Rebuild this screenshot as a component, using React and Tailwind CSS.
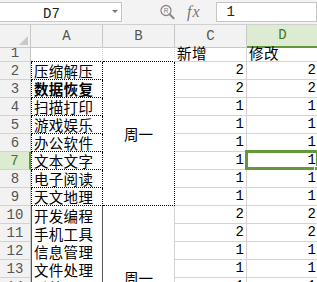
import React from 'react';

const CJK = "font-['Noto_Sans_CJK_SC',sans-serif]";
const MONO = "font-['Liberation_Mono',monospace]";

const rows = [
  { n: 2, a: '压缩解压', c: 2, d: 2 },
  { n: 3, a: '数据恢复', c: 2, d: 2, bold: true },
  { n: 4, a: '扫描打印', c: 1, d: 1 },
  { n: 5, a: '游戏娱乐', c: 1, d: 1 },
  { n: 6, a: '办公软件', c: 1, d: 1 },
  { n: 7, a: '文本文字', c: 1, d: 1 },
  { n: 8, a: '电子阅读', c: 1, d: 1 },
  { n: 9, a: '天文地理', c: 1, d: 1 },
  { n: 10, a: '开发编程', c: 2, d: 2 },
  { n: 11, a: '手机工具', c: 2, d: 2 },
  { n: 12, a: '信息管理', c: 1, d: 1 },
  { n: 13, a: '文件处理', c: 1, d: 1 },
  { n: 14, a: '系统工具', c: 1, d: 1 },
  { n: 15, a: '网络工具', c: 1, d: 1 },
  { n: 16, a: '图形图像', c: 1, d: 1 },
  { n: 17, a: '安全防护', c: 1, d: 1 },
];

function RowHead({ n, active }) {
  return (
    <div
      className={`flex items-center justify-center border-b border-[#d2d2d2] text-[14px] leading-none ${MONO} ${
        active
          ? 'bg-[#dcebd2] text-[#3f7a22] border-r-2 border-r-[#62983a]'
          : 'bg-[#f2f2f2] text-[#555] border-r border-r-[#c8c8c8]'
      }`}
    >
      {n}
    </div>
  );
}

function NumCell({ v, selected }) {
  return (
    <div className={`relative flex items-end justify-end pr-[2px] pb-[2px] border-r border-b border-[#d4d4d4] text-[14px] leading-none text-black ${MONO}`}>
      {v}
      {selected && (
        <div className="absolute -left-[2px] -top-[2px] w-[74px] h-[20px] border-[3px] border-[#62983a]">
          <span className="absolute -right-[3px] -bottom-[4px] w-[5px] h-[5px] bg-[#62983a] border border-white" />
        </div>
      )}
    </div>
  );
}

export default function App() {
  return (
    <div className="w-[317px] h-[282px] overflow-hidden bg-white select-none">
      {/* formula bar */}
      <div className="h-[25px] bg-[#f3f3f3] border-b border-[#d0d0d0] flex items-center">
        <div className="relative w-[123px] h-[20px] -ml-[1px] bg-white border border-[#c6c6c6] flex items-center">
          <span className={`absolute left-[43px] top-[1px] text-[14px] text-[#222] ${MONO}`}>D7</span>
          <svg className="absolute left-[112px] top-[7px]" width="6" height="4" viewBox="0 0 6 4">
            <path d="M0 0h6L3 3z" fill="#777" />
          </svg>
        </div>
        <svg className="ml-[38px]" width="15" height="16" viewBox="0 0 15 16">
          <circle cx="6" cy="6.5" r="5" fill="#f7f7f7" stroke="#8a8a8a" strokeWidth="1.3" />
          <text x="6" y="9" textAnchor="middle" fontSize="6.5" fill="#777" fontFamily="Liberation Sans, sans-serif">R</text>
          <path d="M9.6 10.2l4 4" stroke="#8a8a8a" strokeWidth="2" strokeLinecap="round" />
        </svg>
        <span className="ml-[12px] text-[16px] italic text-[#777] font-['Liberation_Serif',serif] tracking-[1px]">fx</span>
        <div className="ml-[15px] flex-1 h-[20px] bg-white border border-[#c6c6c6] flex items-center pl-[10px]">
          <span className={`text-[14px] text-[#222] ${MONO}`}>1</span>
        </div>
      </div>

      {/* column headers */}
      <div className={`grid grid-cols-[31px_72px_72px_72px_72px] h-[19px] text-[14px] ${MONO}`}>
        <div className="relative bg-[#f2f2f2] border-r border-b border-[#c8c8c8]">
          <svg className="absolute right-[2px] bottom-[2px]" width="9" height="9" viewBox="0 0 9 9">
            <path d="M9 0V9H0z" fill="#c9c9c9" />
          </svg>
        </div>
        {['A', 'B', 'C'].map((l) => (
          <div key={l} className="flex items-center justify-center bg-[#f2f2f2] border-r border-b border-[#c8c8c8] text-[#555]">
            {l}
          </div>
        ))}
        <div className="flex items-center justify-center bg-[#dcebd2] border-r border-[#c8c8c8] border-b-2 border-b-[#62983a] text-[#3f7a22]">
          D
        </div>
      </div>

      {/* sheet */}
      <div className={`grid grid-cols-[31px_72px_72px_72px_72px] auto-rows-[18px] text-[14.5px] ${CJK}`}>
        {/* row 1 */}
        <RowHead n={1} />
        <div className="border-r border-r-[#d4d4d4] border-b border-dotted border-b-black" />
        <div className="border-r border-r-[#d4d4d4] border-b border-dotted border-b-black" />
        <div className="flex items-end pl-[2px] border-r border-b border-[#d4d4d4] leading-[16px] tracking-[0.5px]">新增</div>
        <div className="flex items-end pl-[2px] border-r border-b border-[#d4d4d4] leading-[16px] tracking-[0.5px]">修改</div>

        {rows.map((r, i) => {
          const top = r.n <= 9;
          return (
            <React.Fragment key={r.n}>
              <RowHead n={r.n} active={r.n === 7} />
              <div
                className={`flex items-end pl-[2px] leading-[16px] tracking-[0.3px] text-black ${r.bold ? 'font-bold' : ''} ${
                  top
                    ? 'border-l border-r border-b border-dotted border-black'
                    : 'border-l border-r border-[#555]'
                }`}
              >
                {r.a}
              </div>
              {(i === 0 || i === 8) && (
                <div
                  className={`row-span-8 flex items-center justify-center ${
                    top
                      ? 'border-r border-b border-dotted border-black'
                      : 'border-r border-b border-[#d4d4d4]'
                  }`}
                >
                  周一
                </div>
              )}
              <NumCell v={r.c} />
              <NumCell v={r.d} selected={r.n === 7} />
            </React.Fragment>
          );
        })}
      </div>
    </div>
  );
}
